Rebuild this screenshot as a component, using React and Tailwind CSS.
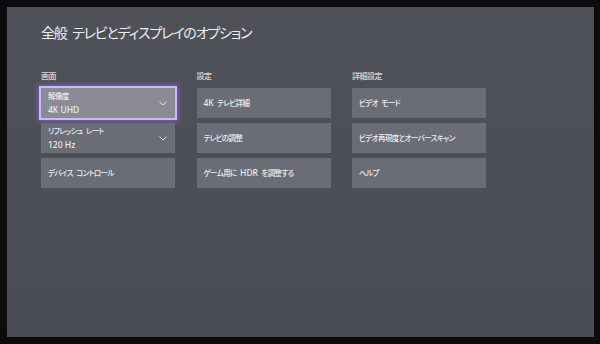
import React from "react";

const font = { fontFamily: '"Noto Sans", "Noto Sans CJK JP", sans-serif', fontFeatureSettings: '"palt"' };

function L({ children }) {
  return <span className="text-[8.5px] tracking-[0px] [word-spacing:0px]">{children}</span>;
}

function Chevron() {
  return (
    <svg width="8" height="5" viewBox="0 0 8 5" className="shrink-0">
      <polyline points="0.5,0.7 4,4 7.5,0.7" fill="none" stroke="#e4e4e8" strokeWidth="1" />
    </svg>
  );
}

function Tile({ label, value, focused }) {
  const base = focused
    ? "bg-[#8a8b95] ring-2 ring-[#cdb8f8] shadow-[0_0_5px_3px_rgba(140,100,220,0.8)]"
    : "bg-[#6a6c76]";
  const txt = "text-[7.5px] leading-[13px] font-medium tracking-[-0.6px] [word-spacing:2px] text-[#ececef]";
  return (
    <div className={`h-[30px] flex items-center justify-between pl-[7px] pr-[8px] ${base}`}>
      {value ? (
        <div className={`flex flex-col ${txt}`}>
          <span>{label}</span>
          <span>{value}</span>
        </div>
      ) : (
        <span className={txt}>{label}</span>
      )}
      {value ? <Chevron /> : null}
    </div>
  );
}

function Column({ title, children }) {
  return (
    <div className="flex flex-col">
      <div className="text-[8px] leading-[8px] font-medium tracking-[-0.5px] text-[#d8d8dc] h-[16px]">{title}</div>
      <div className="flex flex-col gap-[5px]">{children}</div>
    </div>
  );
}

export default function App() {
  return (
    <div className="w-[600px] h-[344px] bg-[#0c0c0d] pt-[7px] pl-[7px]" style={font}>
      <div className="w-[587px] h-[330px] bg-gradient-to-b from-[#4f5159] to-[#4a4d57] pt-[16px] pl-[34px]">
        <div className="text-[14px] leading-[20px] tracking-[-1.2px] [word-spacing:3px] text-[#eeeef0] h-[49px]">
          全般 テレビとディスプレイのオプション
        </div>
        <div className="grid grid-cols-[134px_134px_134px] gap-x-[21.5px]">
          <Column title="画面">
            <Tile label="解像度" value={<L>4K UHD</L>} focused />
            <Tile label="リフレッシュ レート" value={<L>120 Hz</L>} />
            <Tile label="デバイス コントロール" />
          </Column>
          <Column title="設定">
            <Tile label={<><L>4K</L> テレビ詳細</>} />
            <Tile label="テレビの調整" />
            <Tile label={<>ゲーム用に <L>HDR</L> を調整する</>} />
          </Column>
          <Column title="詳細設定">
            <Tile label="ビデオ モード" />
            <Tile label="ビデオ再現度とオーバースキャン" />
            <Tile label="ヘルプ" />
          </Column>
        </div>
      </div>
    </div>
  );
}
